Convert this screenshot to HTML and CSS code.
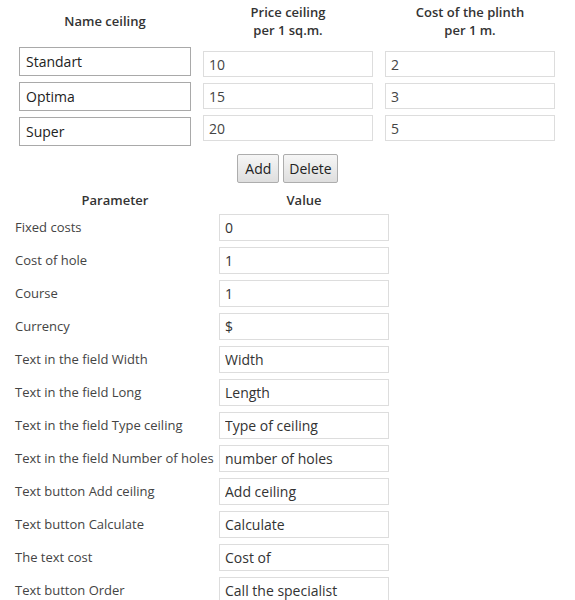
FILE: index.html
```html
<!DOCTYPE html>
<html>
<head>
<meta charset="utf-8">
<link rel="stylesheet" href="styles.css">
</head>
<body>
<div class="top">
  <div class="col col-name">
    <div class="head">Name ceiling</div>
    <div class="inputs">
      <input class="field name" value="Standart">
      <input class="field name" value="Optima">
      <input class="field name" value="Super">
    </div>
  </div>
  <div class="col col-price">
    <div class="head">Price ceiling<br>per 1 sq.m.</div>
    <div class="inputs">
      <input class="field num" value="10">
      <input class="field num" value="15">
      <input class="field num" value="20">
    </div>
  </div>
  <div class="col col-price">
    <div class="head">Cost of the plinth<br>per 1 m.</div>
    <div class="inputs">
      <input class="field num" value="2">
      <input class="field num" value="3">
      <input class="field num" value="5">
    </div>
  </div>
</div>
<div class="actions">
  <button class="btn btn-add">Add</button>
  <button class="btn">Delete</button>
</div>
<div class="params">
  <div class="phead">Parameter</div>
  <div class="phead">Value</div>
  <div class="label">Fixed costs</div><input class="field val" value="0">
  <div class="label">Cost of hole</div><input class="field val" value="1">
  <div class="label">Course</div><input class="field val" value="1">
  <div class="label">Currency</div><input class="field val" value="$">
  <div class="label">Text in the field Width</div><input class="field val" value="Width">
  <div class="label">Text in the field Long</div><input class="field val" value="Length">
  <div class="label">Text in the field Type ceiling</div><input class="field val" value="Type of ceiling">
  <div class="label">Text in the field Number of holes</div><input class="field val" value="number of holes">
  <div class="label">Text button Add ceiling</div><input class="field val" value="Add ceiling">
  <div class="label">Text button Calculate</div><input class="field val" value="Calculate">
  <div class="label">The text cost</div><input class="field val" value="Cost of">
  <div class="label">Text button Order</div><input class="field val" value="Call the specialist">
</div>
</body>
</html>
```
FILE: styles.css
```css
* { box-sizing: border-box; }
body {
  margin: 0;
  background: #fff;
  font-family: "Open Sans", "Liberation Sans", sans-serif;
  font-size: 13px;
  color: #444;
}
.top {
  display: grid;
  grid-template-columns: 172px 170px 170px;
  column-gap: 12px;
  padding: 3px 0 0 19px;
}
.col { display: flex; flex-direction: column; }
.head {
  height: 36px;
  display: flex;
  align-items: center;
  justify-content: center;
  text-align: center;
  font-weight: 600;
  line-height: 18px;
  color: #333;
}
.inputs { display: flex; flex-direction: column; gap: 6px; }
.col-name .inputs { margin-top: 8px; }
.col-price .inputs { margin-top: 12px; }
.field {
  font-family: "Open Sans", "Liberation Sans", sans-serif;
  font-size: 14px;
  margin: 0;
  padding: 0 6px;
  background: #fff;
  outline: none;
}
.field.name {
  height: 29px;
  border: 1px solid #a9a9a9;
  color: #222;
}
.field.num {
  height: 26px;
  border: 1px solid #ddd;
  color: #444;
  padding-left: 5px;
}
.actions {
  display: flex;
  justify-content: center;
  gap: 4px;
  margin-top: 8px;
}
.btn {
  font-family: "Open Sans", "Liberation Sans", sans-serif;
  font-size: 14px;
  color: #222;
  height: 29px;
  padding: 0 5px;
  border: 1px solid #adadad;
  border-radius: 2px;
  background: linear-gradient(#f6f6f6, #dedede);
}
.btn-add { padding: 0 7px; }
.params {
  display: grid;
  grid-template-columns: 200px 170px;
  column-gap: 4px;
  row-gap: 6px;
  align-items: center;
  padding: 8px 0 0 15px;
}
.phead {
  text-align: center;
  font-weight: 600;
  color: #333;
  line-height: 18px;
  margin-bottom: -1px;
}
.label { white-space: nowrap; padding-bottom: 2px; }
.field.val {
  height: 27px;
  border: 1px solid #ddd;
  color: #333;
  padding-left: 5px;
}
```
